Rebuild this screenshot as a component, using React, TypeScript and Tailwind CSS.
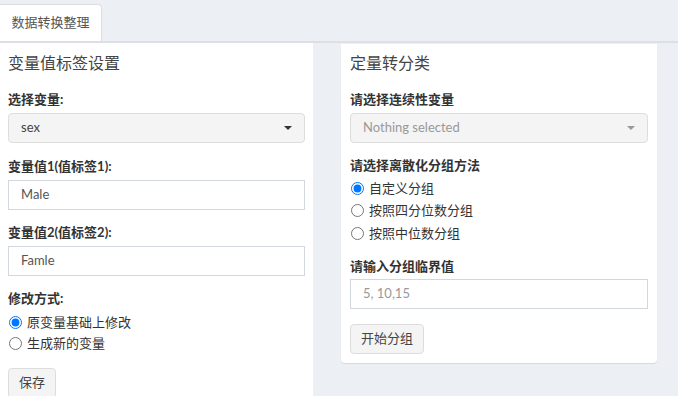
import { ReactNode } from "react";

const font = { fontFamily: '"Lato", "Noto Sans CJK SC", sans-serif' };

function Label({ children, mb = "mb-[5px]" }: { children: ReactNode; mb?: string }) {
  return <p className={`${mb} text-[13px] font-bold leading-[18px] text-[#333]`}>{children}</p>;
}

function Caret({ light }: { light?: boolean }) {
  return (
    <span
      className={`h-0 w-0 border-x-[4px] border-t-[4px] border-x-transparent ${
        light ? "border-t-[#999]" : "border-t-[#333]"
      }`}
    />
  );
}

function Radio({ name, label, checked, h = "h-[21px]" }: { name: string; label: string; checked?: boolean; h?: string }) {
  return (
    <label className={`flex ${h} items-center gap-[5px] text-[13px] text-[#333]`}>
      <input type="radio" name={name} defaultChecked={checked} className="m-0 ml-[1px] h-[13px] w-[13px]" />
      <span>{label}</span>
    </label>
  );
}

export default function App() {
  return (
    <div className="min-h-[396px] bg-[#ecf0f5]" style={font}>
      <div className="flex border-b-2 border-[#dcdfe5] pt-1">
        <div className="flex h-[37px] w-[102px] items-center justify-center rounded-tr border-r border-t border-[#dddddd] bg-white text-[13px] text-[#555]">
          数据转换整理
        </div>
      </div>
      <div className="flex items-start gap-[28px]">
        <div className="h-[353px] w-[313px] overflow-hidden bg-white px-2 pt-[9px]">
          <h3 className="mb-[16px] text-[16px] leading-[22px] text-[#444]">变量值标签设置</h3>
          <Label>选择变量:</Label>
          <div className="mb-[14px] flex h-[30px] items-center justify-between rounded border border-[#dddddd] bg-[#f4f4f4] px-3 text-[13px] text-[#444]">
            <span>sex</span>
            <Caret />
          </div>
          <Label>变量值1(值标签1):</Label>
          <div className="mb-[13px] flex h-[30px] items-center border border-[#d2d6de] px-3 text-[13px] text-[#555]">
            Male
          </div>
          <Label>变量值2(值标签2):</Label>
          <div className="mb-[13px] flex h-[30px] items-center border border-[#d2d6de] px-3 text-[13px] text-[#555]">
            Famle
          </div>
          <Label>修改方式:</Label>
          <Radio name="m" label="原变量基础上修改" checked />
          <Radio name="m" label="生成新的变量" />
          <button className="mt-[14px] h-[30px] rounded border border-[#dddddd] bg-[#f4f4f4] px-[10px] text-[13px] text-[#444]">
            保存
          </button>
        </div>
        <div className="mt-[1px] w-[316px] rounded-b bg-white px-[9px] pb-[9px] pt-[8px] shadow-[0_1px_1px_rgba(0,0,0,0.1)]">
          <h3 className="mb-[16px] text-[16px] leading-[22px] text-[#444]">定量转分类</h3>
          <Label>请选择连续性变量</Label>
          <div className="mb-[13px] flex h-[30px] items-center justify-between rounded border border-[#dddddd] bg-[#f4f4f4] px-3 text-[13px] text-[#999]">
            <span>Nothing selected</span>
            <Caret light />
          </div>
          <Label mb="mb-[3px]">请选择离散化分组方法</Label>
          <Radio name="g" label="自定义分组" checked h="h-[22.5px]" />
          <Radio name="g" label="按照四分位数分组" h="h-[22.5px]" />
          <Radio name="g" label="按照中位数分组" h="h-[22.5px]" />
          <div className="mt-[12px]">
            <Label mb="mb-[4px]">请输入分组临界值</Label>
          </div>
          <div className="mb-[15px] flex h-[30px] items-center border border-[#d2d6de] px-3 text-[13px] text-[#999]">
            5, 10,15
          </div>
          <button className="h-[30px] rounded border border-[#dddddd] bg-[#f4f4f4] px-[10px] text-[13px] text-[#444]">
            开始分组
          </button>
        </div>
      </div>
    </div>
  );
}
